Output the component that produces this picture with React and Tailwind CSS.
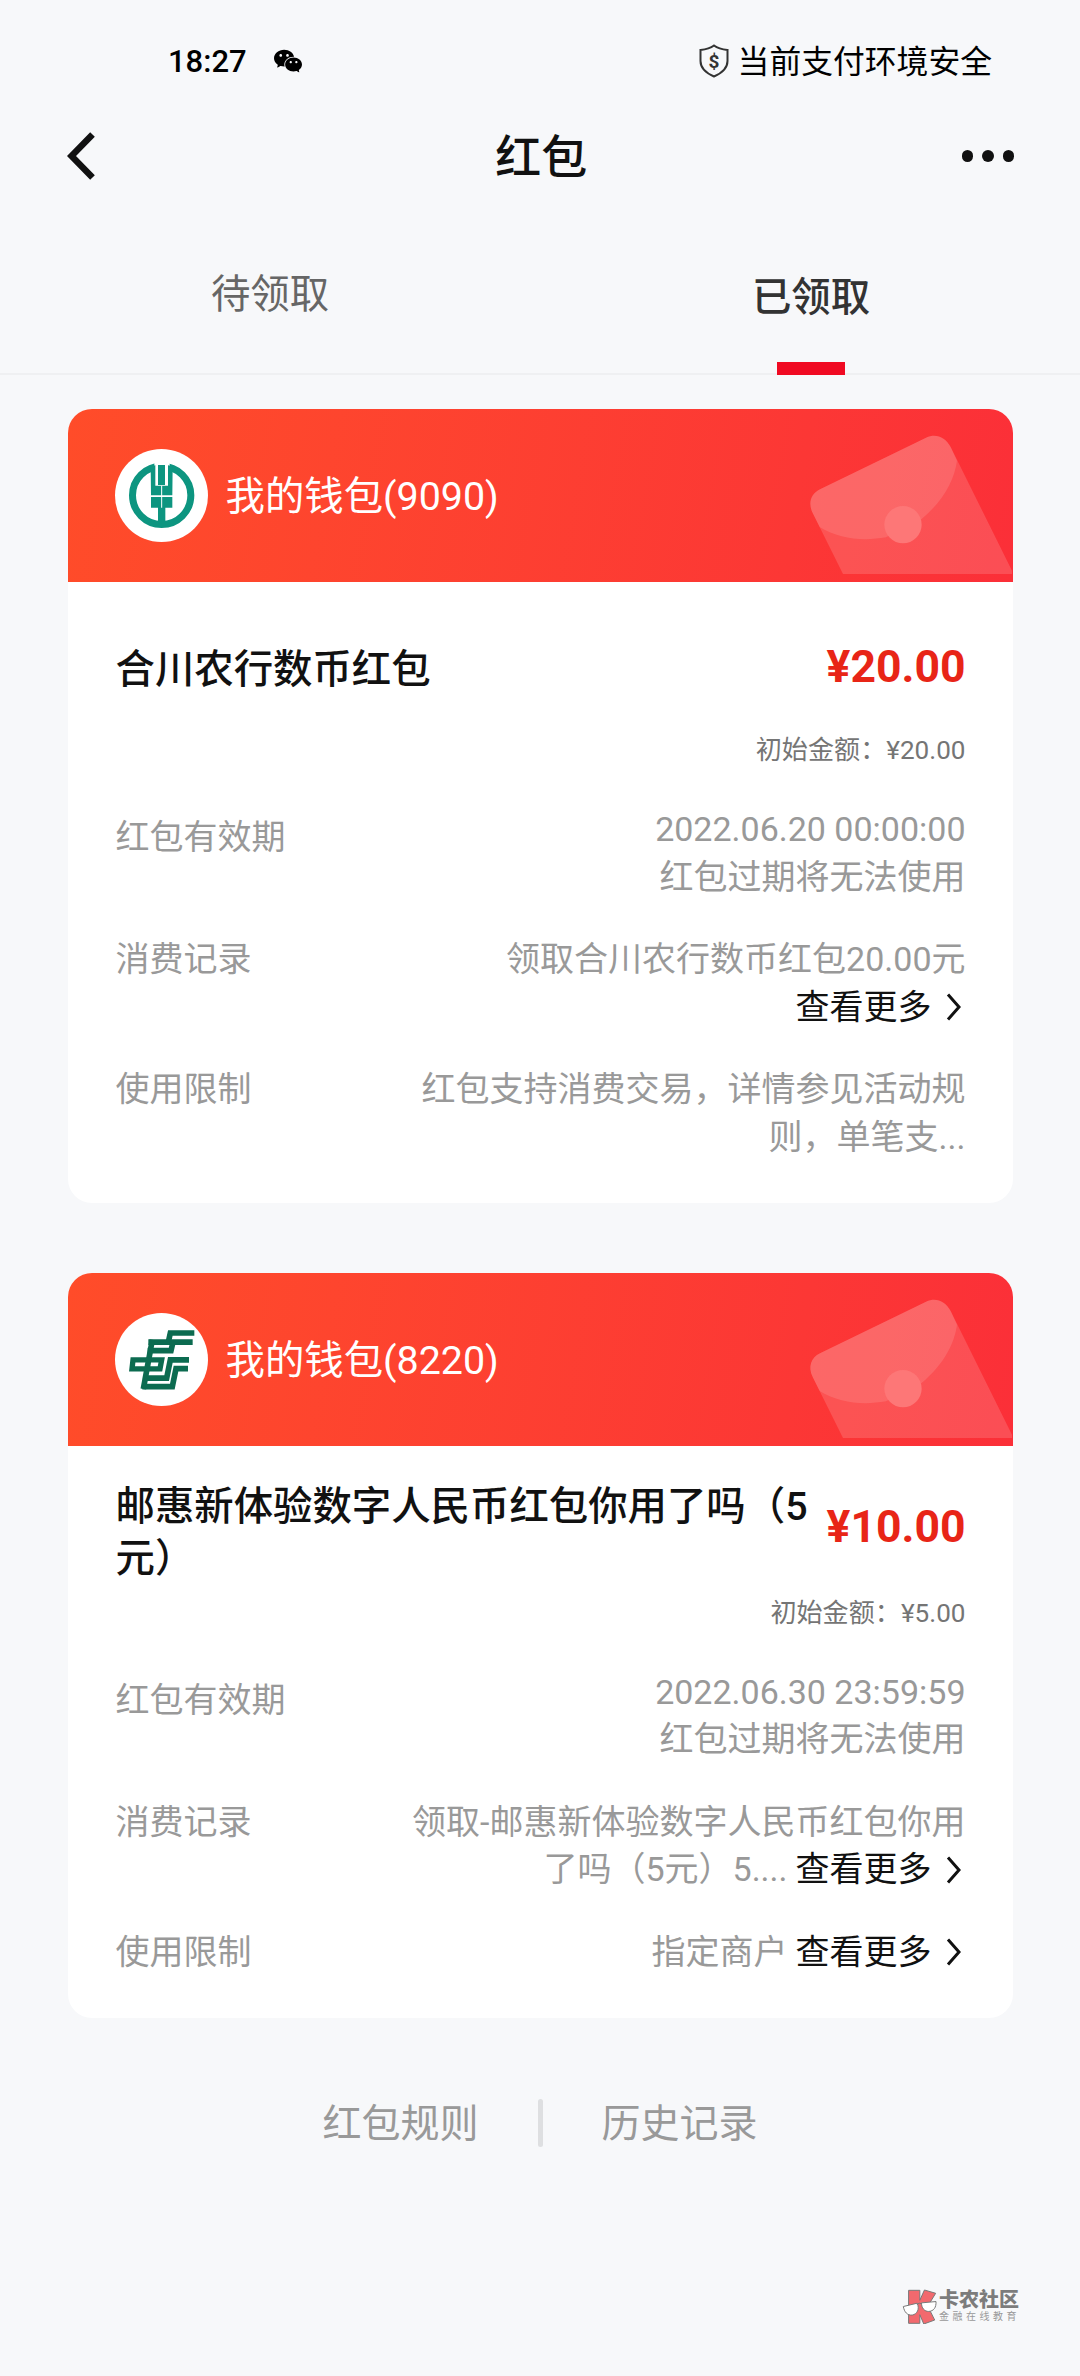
import { AiFillWechat } from "react-icons/ai";

const packets = [
  {
    id: "9090",
    bank: "abc",
    title: "合川农行数币红包",
    amount: "20.00",
    initial: "20.00",
    expires: "2022.06.20 00:00:00",
    record: ["领取合川农行数币红包20.00元", ""],
    recordMore: true,
    limit: ["红包支持消费交易，详情参见活动规", "则，单笔支..."],
    limitMore: false,
    headClass: "h-[140px]",
    amountClass: "mb-0.5",
  },
  {
    id: "8220",
    bank: "psbc",
    title: "邮惠新体验数字人民币红包你用了吗（5元）",
    amount: "10.00",
    initial: "5.00",
    expires: "2022.06.30 23:59:59",
    record: ["领取-邮惠新体验数字人民币红包你用", "了吗（5元）5...."],
    recordMore: true,
    limit: ["指定商户"],
    limitMore: true,
    headClass: "h-[138.5px]",
    amountClass: "mb-2",
  },
];

const AbcLogo = () => (
  <svg viewBox="8 10 279 279" className="size-full">
    <circle cx="148" cy="149" r="87.5" fill="none" stroke="#0d9580" strokeWidth="21" />
    <path d="M126 40h46v60h-46z" fill="#fff" />
    <g fill="#0d9580">
      <path d="M137 58h21v60h-21z" />
      <path d="M115 62l14-3v61h19v29h-32z" />
      <path d="M181 62l-14-3v61h-19v29h32z" />
      <path d="M116 154h64v32h-64z" />
      <path d="M137 182h22v62h-22z" />
    </g>
    <path d="M146.500 120h3v66h-3z" fill="#fff" />
  </svg>
);

const PsbcLogo = () => (
  <svg viewBox="8 10 279 279" className="size-full" fill="none" stroke="#0c6b50" strokeWidth="17">
    <path d="M108 97.5H168L174 70H246" />
    <path d="M106 123H176L182 97.5H241" />
    <path d="M120 90L93 238" />
    <path d="M62 150.5H148L143 177.5H59Z" strokeWidth="16" />
    <path d="M96 205.5H163L174 150.5H230" />
    <path d="M90 231H180L191 177H227" />
  </svg>
);

const Envelope = () => (
  <svg viewBox="320 58 620 519" className="absolute right-0 top-0 h-full">
    <path
      d="M340 370C325 340 335 312 362 299L680 144C710 130 738 142 754 172L938 543V553H431Z"
      fill="#fff"
      fillOpacity="0.15"
    />
    <path
      d="M361 412L340 370C325 340 335 312 362 299L680 144C710 130 738 142 754 172L773 213C765 270 735 330 667 388L560 443C490 455 420 448 361 412Z"
      fill="#fff"
      fillOpacity="0.12"
    />
    <circle cx="611" cy="405" r="56" fill="#fd7777" />
  </svg>
);

const More = () => (
  <span className="flex items-center text-[#111]">
    查看更多
    <svg viewBox="0 0 16 28" className="ml-[14px] mr-1 h-7 w-4" fill="none" stroke="#111" strokeWidth="3">
      <path d="M2 1.5L13 14L2 26.5" />
    </svg>
  </span>
);

const Row = ({ label, labelClass = "", lines, more }) => (
  <div className="flex justify-between text-[34px] leading-[47.5px] text-[#999]">
    <span className={labelClass}>{label}</span>
    <div className="flex flex-col items-end">
      {lines.map((line, index) => (
        <div key={index} className="flex h-[47.5px] gap-2 whitespace-nowrap">
          {line && <span>{line}</span>}
          {more && index === lines.length - 1 && <More />}
        </div>
      ))}
    </div>
  </div>
);

const PacketCard = ({ packet }) => (
  <section className="overflow-hidden rounded-3xl bg-white">
    <header className="relative flex h-[173px] items-center bg-linear-100 from-[#ff4c29] to-[#fb2f38] pl-[47px]">
      <Envelope />
      <div className="size-[93px] overflow-hidden rounded-full bg-white">
        {packet.bank === "abc" ? <AbcLogo /> : <PsbcLogo />}
      </div>
      <span className="ml-[18px] pt-0.5 text-[39.4px] text-white">我的钱包({packet.id})</span>
    </header>

    <div className="pb-[42px] pl-12 pr-[47px] pt-4">
      <div className={`flex items-center justify-between ${packet.headClass}`}>
        <h2 className="w-[700px] pt-1 text-[39.4px] font-medium leading-[52px] text-[#111]">{packet.title}</h2>
        <span className={`text-[44.5px] font-bold text-[#e82517] ${packet.amountClass}`}>¥{packet.amount}</span>
      </div>
      <p className="text-right text-[26.1px] leading-6 text-[#757575]">初始金额：¥{packet.initial}</p>

      <div className="mt-11 flex flex-col gap-[35px]">
        <Row label="红包有效期" labelClass="pt-2" lines={[packet.expires, "红包过期将无法使用"]} />
        <Row label="消费记录" lines={packet.record} more={packet.recordMore} />
        <Row label="使用限制" lines={packet.limit} more={packet.limitMore} />
      </div>
    </div>
  </section>
);

const StatusBar = () => (
  <div className="flex h-[122px] items-center justify-between pl-[168px] pr-[88px] text-black">
    <div className="flex items-center">
      <span className="pt-0.5 text-[31px] font-medium">18:27</span>
      <AiFillWechat className="ml-[25px] size-[32px]" />
    </div>
    <div className="flex items-center gap-[9px]">
      <svg viewBox="0 0 30 34" className="h-[34px] w-[30px]">
        <path
          d="M15 1.5C11 4.500 6 5.500 1.500 6V17C1.500 25 8 29.500 15 32.500C22 29.500 28.500 25 28.500 17V6C24 5.500 19 4.500 15 1.500Z"
          fill="none"
          stroke="#333"
          strokeWidth="2"
        />
        <text x="15" y="23.500" textAnchor="middle" fontSize="19" fontWeight="700" fill="#333">
          $
        </text>
      </svg>
      <span className="pt-[3px] text-[31.800px]">当前支付环境安全</span>
    </div>
  </div>
);

const Watermark = () => (
  <div className="flex items-center gap-0.5 text-[#7c7c7c]">
    <svg viewBox="58 84 106 106" className="size-[35px]" stroke="#777" strokeWidth="3">
      <path d="M78 88H112V118L126 87L160 97L136 136L157 178L124 190L112 162V188H78Z" fill="#f2696e" />
      <path d="M62 137L104 127C112 145 104 160 89 163C74 164 65 154 62 137Z" fill="#fff" />
      <path d="M117 126L161 122C162 140 154 151 139 152C126 152 117 142 117 126Z" fill="#fff" />
      <path d="M103 131Q110 124 118 129" fill="none" />
    </svg>
    <div>
      <p className="text-[20px] font-black leading-[21px]">卡农社区</p>
      <p className="text-[10px] leading-[12px] tracking-[3.5px] text-[#999]">金融在线教育</p>
    </div>
  </div>
);

const App = () => {
  return (
    <div className="flex h-[2376px] w-[1080px] flex-col bg-[#f7f8fa] font-[Roboto,'Noto_Sans_CJK_SC',sans-serif]">
      <StatusBar />

      <nav className="flex h-[68px] items-center justify-between pl-[67px] pr-[66px]">
        <svg viewBox="0 0 28 48" className="h-12 w-7" fill="none" stroke="#111" strokeWidth="6.500">
          <path d="M25.500 2.500L4.500 24L25.500 45.500" />
        </svg>
        <h1 className="ml-[26px] pt-[3px] text-[46px] font-medium text-[#111]">红包</h1>
        <div className="flex gap-[9px]">
          <i className="size-[11.500px] rounded-full bg-[#111]" />
          <i className="size-[11.500px] rounded-full bg-[#111]" />
          <i className="size-[11.500px] rounded-full bg-[#111]" />
        </div>
      </nav>

      <div className="flex h-[185px] border-b-2 border-[#eff0f2] text-[39.400px]">
        <div className="flex w-1/2 justify-center pt-[79px] leading-[52px] text-[#666]">待领取</div>
        <div className="flex w-1/2 flex-col items-center justify-between pl-0.5 pt-[82px] font-medium leading-[52px] text-[#333]">
          已领取
          <span className="-mb-0.5 h-[13px] w-[68px] bg-[#f00a22]" />
        </div>
      </div>

      <main className="mt-[34px] flex flex-col gap-[70px] px-[67.500px]">
        {packets.map((packet) => (
          <PacketCard key={packet.id} packet={packet} />
        ))}
      </main>

      <footer className="mt-[81px] flex h-12 items-center justify-center gap-[59px] text-[39px] text-[#999]">
        <span className="pt-0.5">红包规则</span>
        <span className="h-12 w-[5px] rounded-full bg-[#dedfe1]" />
        <span className="pt-0.5">历史记录</span>
      </footer>

      <div className="mb-[52px] mr-[60px] mt-auto self-end">
        <Watermark />
      </div>
    </div>
  );
};

export default App;
